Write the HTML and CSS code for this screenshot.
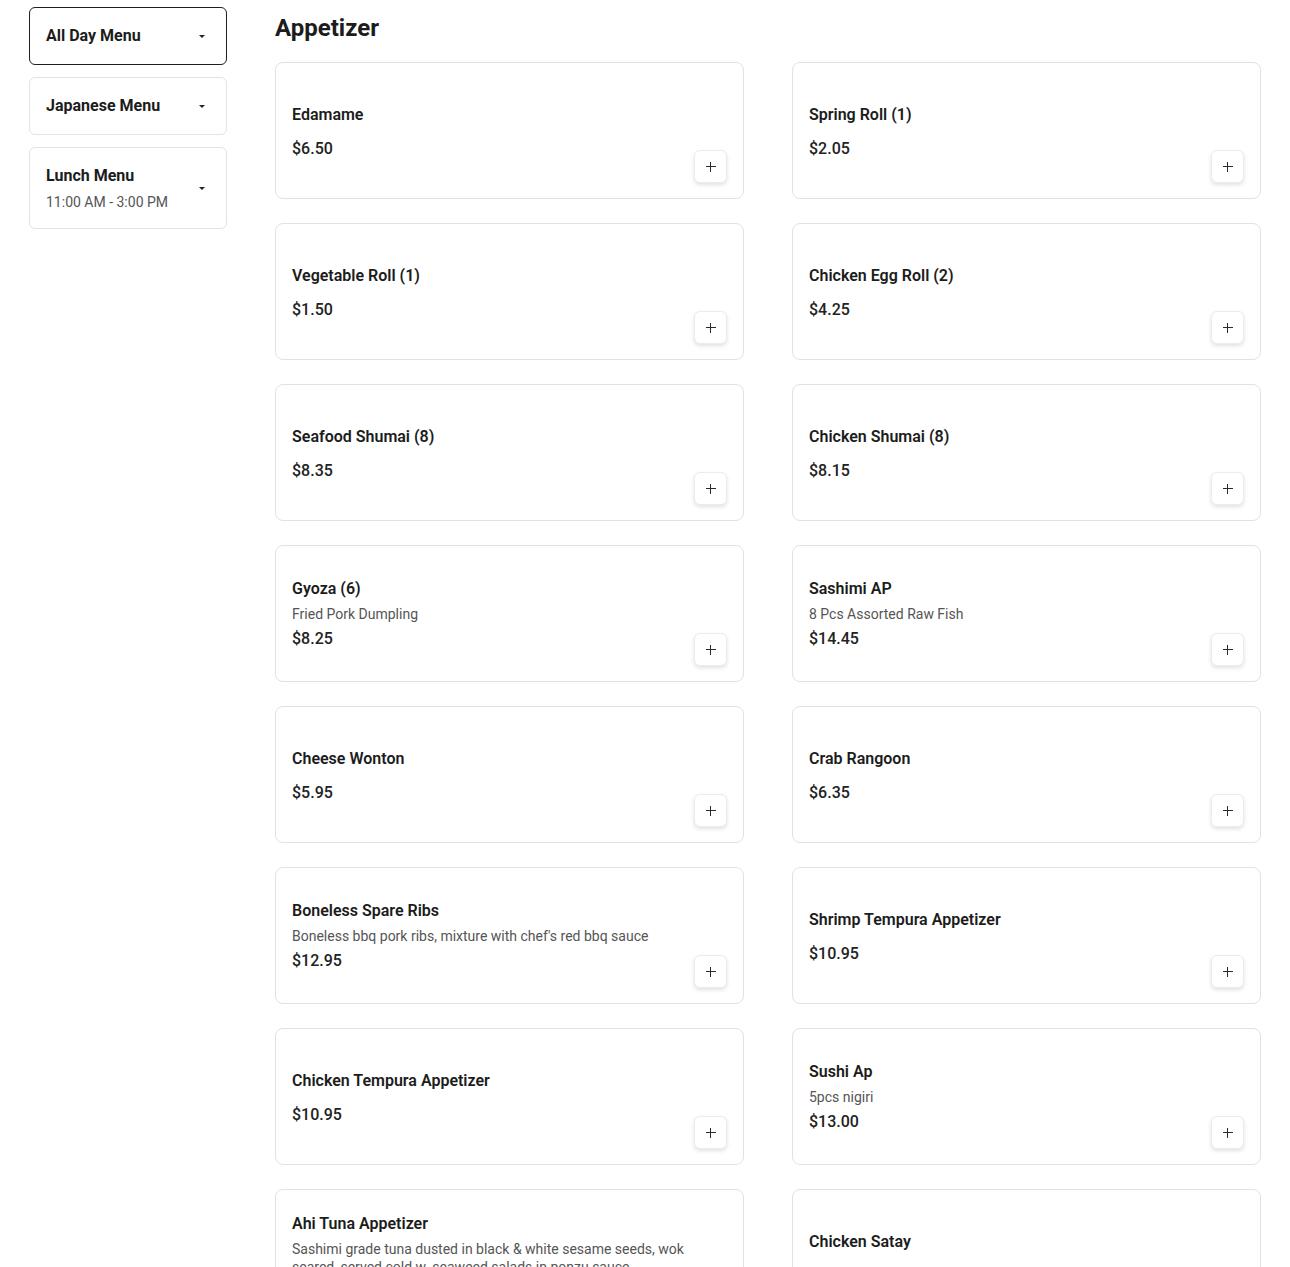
FILE: index.html
```html
<!DOCTYPE html>
<html lang="en">
<head>
<meta charset="utf-8">
<title>Menu</title>
<link rel="stylesheet" href="styles.css">
</head>
<body>
<div class="page">
  <aside class="sidebar">
    <div class="menu-tab active">
      <div class="tab-text"><div class="tab-name">All Day Menu</div></div>
      <span class="caret"></span>
    </div>
    <div class="menu-tab">
      <div class="tab-text"><div class="tab-name">Japanese Menu</div></div>
      <span class="caret"></span>
    </div>
    <div class="menu-tab">
      <div class="tab-text"><div class="tab-name">Lunch Menu</div><div class="tab-time">11:00 AM - 3:00 PM</div></div>
      <span class="caret"></span>
    </div>
  </aside>
  <main class="main">
    <h1 class="section-title">Appetizer</h1>
    <div class="grid">
      <div class="card nodesc"><div class="info"><div class="name">Edamame</div><div class="price">$6.50</div></div><button class="add"><span class="plus"></span></button></div>
      <div class="card nodesc"><div class="info"><div class="name">Spring Roll (1)</div><div class="price">$2.05</div></div><button class="add"><span class="plus"></span></button></div>
      <div class="card nodesc"><div class="info"><div class="name">Vegetable Roll (1)</div><div class="price">$1.50</div></div><button class="add"><span class="plus"></span></button></div>
      <div class="card nodesc"><div class="info"><div class="name">Chicken Egg Roll (2)</div><div class="price">$4.25</div></div><button class="add"><span class="plus"></span></button></div>
      <div class="card nodesc"><div class="info"><div class="name">Seafood Shumai (8)</div><div class="price">$8.35</div></div><button class="add"><span class="plus"></span></button></div>
      <div class="card nodesc"><div class="info"><div class="name">Chicken Shumai (8)</div><div class="price">$8.15</div></div><button class="add"><span class="plus"></span></button></div>
      <div class="card"><div class="info"><div class="name">Gyoza (6)</div><div class="desc">Fried Pork Dumpling</div><div class="price">$8.25</div></div><button class="add"><span class="plus"></span></button></div>
      <div class="card"><div class="info"><div class="name">Sashimi AP</div><div class="desc">8 Pcs Assorted Raw Fish</div><div class="price">$14.45</div></div><button class="add"><span class="plus"></span></button></div>
      <div class="card nodesc"><div class="info"><div class="name">Cheese Wonton</div><div class="price">$5.95</div></div><button class="add"><span class="plus"></span></button></div>
      <div class="card nodesc"><div class="info"><div class="name">Crab Rangoon</div><div class="price">$6.35</div></div><button class="add"><span class="plus"></span></button></div>
      <div class="card"><div class="info"><div class="name">Boneless Spare Ribs</div><div class="desc">Boneless bbq pork ribs, mixture with chef's red bbq sauce</div><div class="price">$12.95</div></div><button class="add"><span class="plus"></span></button></div>
      <div class="card nodesc"><div class="info"><div class="name">Shrimp Tempura Appetizer</div><div class="price">$10.95</div></div><button class="add"><span class="plus"></span></button></div>
      <div class="card nodesc"><div class="info"><div class="name">Chicken Tempura Appetizer</div><div class="price">$10.95</div></div><button class="add"><span class="plus"></span></button></div>
      <div class="card"><div class="info"><div class="name">Sushi Ap</div><div class="desc">5pcs nigiri</div><div class="price">$13.00</div></div><button class="add"><span class="plus"></span></button></div>
      <div class="card"><div class="info"><div class="name">Ahi Tuna Appetizer</div><div class="desc">Sashimi grade tuna dusted in black &amp; white sesame seeds, wok seared, served cold w. seaweed salads in ponzu sauce</div><div class="price">$13.95</div></div><button class="add"><span class="plus"></span></button></div>
      <div class="card nodesc"><div class="info"><div class="name">Chicken Satay</div><div class="price faint">$9.95</div></div><button class="add"><span class="plus"></span></button></div>
    </div>
  </main>
</div>
</body>
</html>
```

FILE: styles.css
```css
* { box-sizing: border-box; }
html, body { margin: 0; padding: 0; background: #fff; }
body {
  font-family: Roboto, "Liberation Sans", Arial, sans-serif;
  color: #1c1c1c;
  height: 1267px;
  overflow: hidden;
}
.page {
  display: flex;
  gap: 48px;
  padding: 7px 29px 0 29px;
}
.sidebar {
  width: 198px;
  flex: 0 0 198px;
  display: flex;
  flex-direction: column;
  gap: 12px;
}
.menu-tab {
  display: flex;
  align-items: center;
  justify-content: space-between;
  border: 1px solid #e3e3e3;
  border-radius: 6px;
  padding: 16px;
  background: #fff;
}
.menu-tab.active { border-color: #1f1f1f; }
.tab-text { display: flex; flex-direction: column; gap: 4px; }
.tab-name { font-size: 16px; font-weight: 700; line-height: 24px; color: #1c1c1c; }
.tab-time { font-size: 14px; line-height: 20px; color: #555; }
.caret {
  width: 16px;
  height: 16px;
  display: flex;
  align-items: center;
  justify-content: center;
}
.caret::before {
  content: "";
  border-left: 3.5px solid transparent;
  border-right: 3.5px solid transparent;
  border-top: 3.5px solid #222;
}
.main { flex: 1; min-width: 0; }
.section-title {
  margin: 5px 0 18px 0;
  font-size: 24px;
  line-height: 32px;
  font-weight: 700;
  color: #1c1c1c;
}
.grid {
  display: grid;
  grid-template-columns: 1fr 1fr;
  column-gap: 48px;
  row-gap: 24px;
}
.card {
  display: flex;
  align-items: stretch;
  gap: 8px;
  min-height: 137px;
  border: 1px solid #e2e2e2;
  border-radius: 8px;
  padding: 16px;
  background: #fff;
}
.info {
  flex: 1;
  min-width: 0;
  display: flex;
  flex-direction: column;
  justify-content: center;
  gap: 4px;
}
.nodesc .info { padding-top: 2px; }
.name { font-size: 16px; line-height: 24px; font-weight: 600; color: #1c1c1c; }
.desc { font-size: 14px; line-height: 18px; color: #555; }
.price { font-size: 16px; line-height: 24px; font-weight: 500; color: #222; }
.nodesc .price { margin-top: 6px; }
.price.faint { color: #f0f0f0; }
.add {
  align-self: flex-end;
  width: 33px;
  height: 33px;
  flex: 0 0 33px;
  border: 1px solid #ececec;
  border-radius: 6px;
  background: #fff;
  box-shadow: 0 2px 4px rgba(0, 0, 0, 0.12);
  display: flex;
  align-items: center;
  justify-content: center;
  padding: 0;
  margin-bottom: -1px;
}
.plus {
  position: relative;
  width: 10px;
  height: 10px;
  display: block;
}
.plus::before, .plus::after {
  content: "";
  position: absolute;
  background: #2a2a2a;
}
.plus::before { left: 0; right: 0; top: 4.25px; height: 1.6px; }
.plus::after { top: 0; bottom: 0; left: 4.25px; width: 1.6px; }
```
